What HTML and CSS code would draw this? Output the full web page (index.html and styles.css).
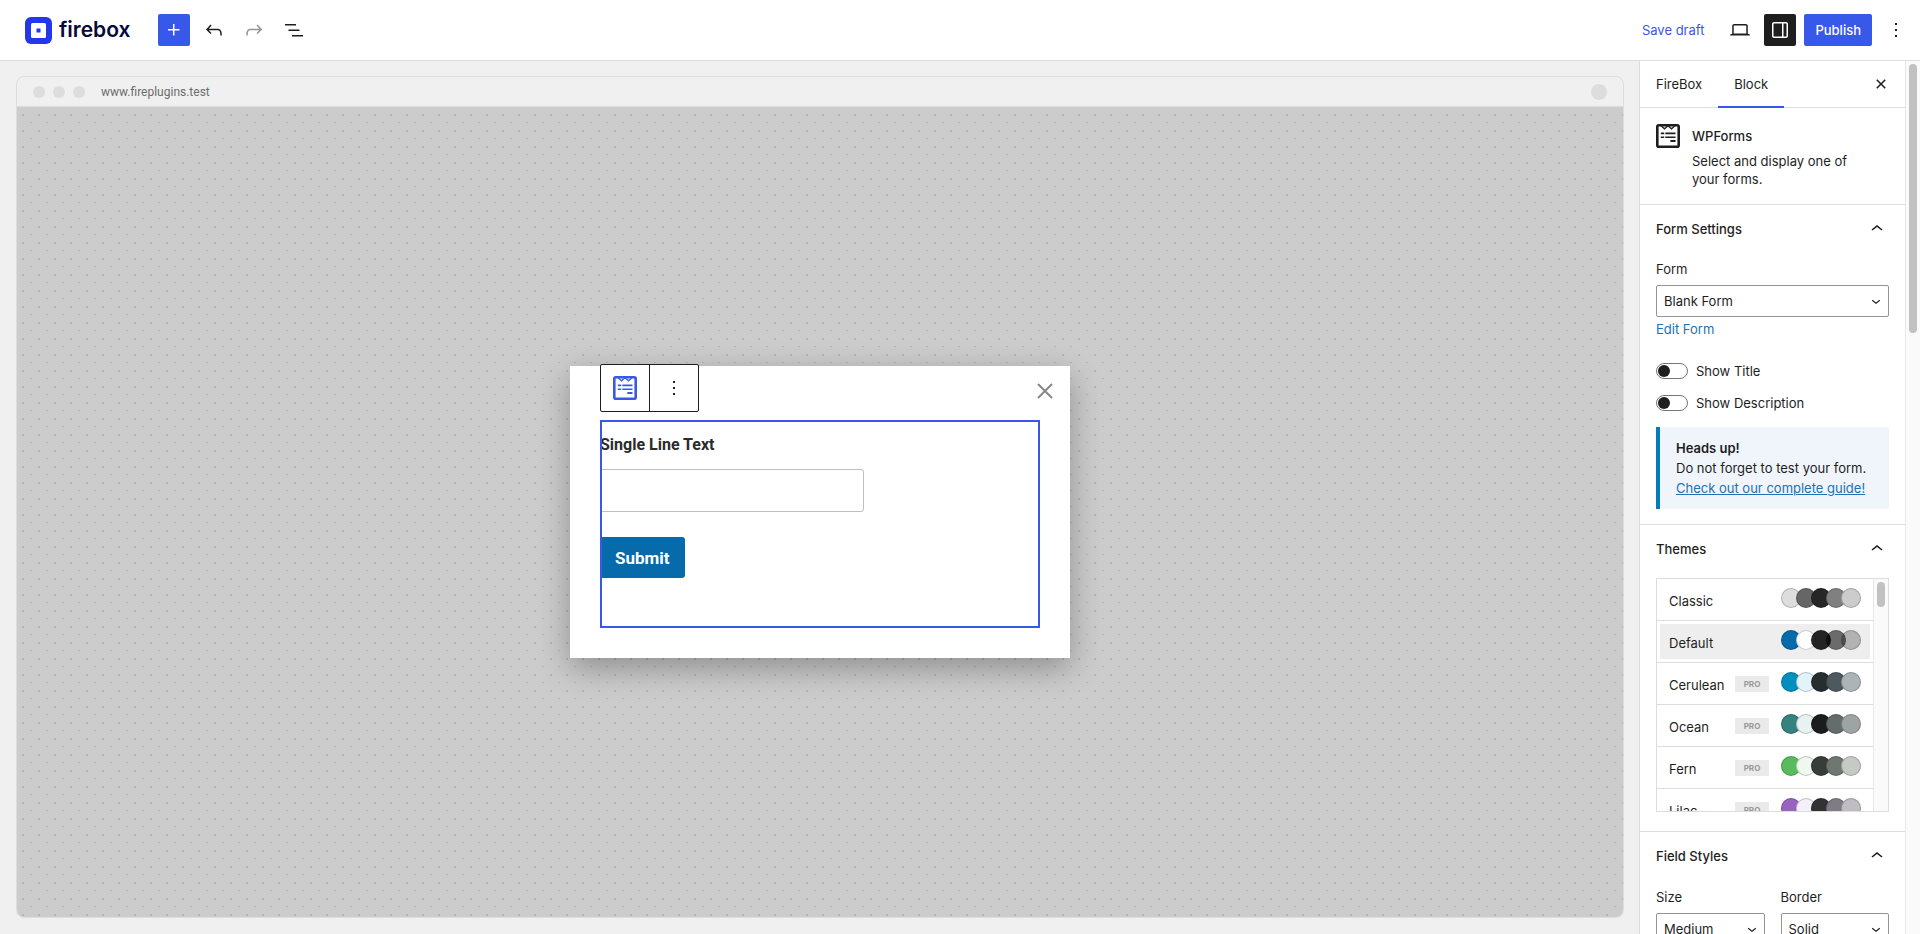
FILE: index.html
```
<!DOCTYPE html>
<html lang="en">
<head>
    <meta charset="UTF-8">
    <meta name="viewport" content="width=device-width, initial-scale=1.0">
    <title>FireBox</title>
    <link rel="stylesheet" href="styles.css">
</head>
<body>
    <!-- Shared icons -->
    <svg class="sprite" aria-hidden="true">
        <symbol id="chevron-up" viewBox="0 0 24 24"><path d="M6.5 12.4L12 8l5.5 4.4-.9 1.2L12 10l-4.5 3.6-1-1.2z"/></symbol>
        <symbol id="chevron-down" viewBox="0 0 24 24"><path d="M17.5 11.6L12 16l-5.5-4.4.9-1.2L12 14l4.5-3.6 1 1.2z"/></symbol>
        <symbol id="more" viewBox="0 0 24 24"><path d="M13 19h-2v-2h2v2zm0-6h-2v-2h2v2zm0-6h-2V5h2v2z"/></symbol>
        <symbol id="wpforms" viewBox="0 0 24 24">
            <rect x="1.3" y="1.3" width="21.4" height="21.4" rx="1.5" fill="none" stroke="currentColor" stroke-width="2.6"/>
            <path d="M5 1.800l3.500 3L12 1.800l3.500 3L19 1.800" fill="none" stroke="currentColor" stroke-width="1.3"/>
            <path d="M4.800 8.500h3.400v1.700H4.800zM9.300 8.500h10.200v1.700H9.300zM4.800 12.400h3.400v1.700H4.800zM9.300 12.400h10.200v1.700H9.300zM14.400 16h5.100v2h-5.100z"/>
        </symbol>
    </svg>

    <header class="header">
        <div class="header-group">
            <a class="logo" href="#">
                <svg width="27" height="27" viewBox="0 0 27 27">
                    <rect width="27" height="27" rx="6" fill="#2337ec"/>
                    <rect x="6" y="6" width="15" height="15" rx="1.5" fill="#fff"/>
                    <rect x="11.5" y="11.5" width="4" height="4" fill="#2337ec"/>
                </svg>
                <span>firebox</span>
            </a>
            <button class="icon-btn primary" aria-label="Add block"><svg viewBox="0 0 24 24"><path d="M11 12.5V17.5H12.5V12.5H17.5V11H12.5V6H11V11H6V12.5H11Z"/></svg></button>
            <button class="icon-btn" aria-label="Undo"><svg viewBox="0 0 24 24"><path d="M18.3 11.7c-.6-.6-1.4-.9-2.3-.9H6.7l2.9-3.3-1.1-1-4.5 5L8.5 16l1-1-2.7-2.7H16c.5 0 .9.2 1.3.5 1 1 1 3.4 1 4.5v.3h1.5v-.2c0-1.5 0-4.3-1.5-5.7z"/></svg></button>
            <button class="icon-btn" aria-label="Redo" disabled><svg viewBox="0 0 24 24"><path d="M15.6 6.5l-1.1 1 2.9 3.3H8c-.9 0-1.7.3-2.3.9-1.4 1.5-1.4 4.2-1.4 5.6v.2h1.5v-.3c0-1.1 0-3.5 1-4.5.3-.3.7-.5 1.3-.5h9.2L14.5 15l1.1 1.1 4.6-4.6-4.6-5z"/></svg></button>
            <button class="icon-btn" aria-label="Document overview"><svg viewBox="0 0 24 24"><path d="M3 6h11v1.5H3V6Zm3.5 5.5h11V13h-11v-1.5ZM21 17H10v1.5h11V17Z"/></svg></button>
        </div>
        <div class="header-group">
            <button class="text-btn">Save draft</button>
            <button class="icon-btn" aria-label="Preview"><svg viewBox="0 0 24 24"><path d="M20.5 16h-.7V8c0-1.1-.9-2-2-2H6.2c-1.1 0-2 .9-2 2v8h-.7c-.8 0-1.5.7-1.5 1.5h20c0-.8-.7-1.5-1.5-1.5zM5.7 8c0-.3.2-.5.5-.5h11.6c.3 0 .5.2.5.5v7.6H5.7V8z"/></svg></button>
            <button class="icon-btn pressed" aria-label="Settings"><svg viewBox="0 0 24 24"><path d="M18 4H6c-1.1 0-2 .9-2 2v12c0 1.1.9 2 2 2h12c1.1 0 2-.9 2-2V6c0-1.1-.9-2-2-2zm-4 14.5H6c-.3 0-.5-.2-.5-.5V6c0-.3.2-.5.5-.5h8v13zm4.5-.5c0 .3-.2.5-.5.5h-2.5v-13H18c.3 0 .5.2.5.5v12z"/></svg></button>
            <button class="text-btn primary">Publish</button>
            <button class="icon-btn" aria-label="Options"><svg><use href="#more"/></svg></button>
        </div>
    </header>

    <div class="workspace">
        <main class="canvas">
            <div class="browser">
                <div class="browser-bar">
                    <span class="dot"></span>
                    <span class="dot"></span>
                    <span class="dot"></span>
                    <span class="address">www.fireplugins.test</span>
                    <span class="avatar"></span>
                </div>
                <div class="browser-page">
                    <div class="popup">
                        <div class="block-toolbar">
                            <button class="active" aria-label="WPForms"><svg><use href="#wpforms"/></svg></button>
                            <button aria-label="Options"><svg><use href="#more"/></svg></button>
                        </div>
                        <button class="popup-close" aria-label="Close">
                            <svg viewBox="0 0 16 16"><path d="M1 1l14 14M15 1L1 15" stroke="currentColor" stroke-width="2"/></svg>
                        </button>
                        <form class="form-block">
                            <label for="single">Single Line Text</label>
                            <input type="text" id="single">
                            <button type="button">Submit</button>
                        </form>
                    </div>
                </div>
            </div>
        </main>

        <aside class="sidebar">
            <div class="sidebar-content">
                <div class="tabs">
                    <button class="tab">FireBox</button>
                    <button class="tab active">Block</button>
                    <button class="icon-btn tabs-close" aria-label="Close settings"><svg viewBox="0 0 24 24"><path d="M12 13.06l3.712 3.713 1.061-1.06L13.061 12l3.712-3.712-1.06-1.06L12 10.938 8.288 7.227l-1.061 1.06L10.939 12l-3.712 3.712 1.06 1.061L12 13.061z"/></svg></button>
                </div>

                <div class="block-card">
                    <svg><use href="#wpforms"/></svg>
                    <div>
                        <h2>WPForms</h2>
                        <p>Select and display one of your forms.</p>
                    </div>
                </div>

                <section class="panel">
                    <button class="panel-title">Form Settings<svg><use href="#chevron-up"/></svg></button>
                    <label class="field-label" for="form">Form</label>
                    <div class="select">
                        <select id="form"><option>Blank Form</option></select>
                        <svg><use href="#chevron-down"/></svg>
                    </div>
                    <a class="edit-link" href="#">Edit Form</a>
                    <label class="toggle"><input type="checkbox">Show Title</label>
                    <label class="toggle"><input type="checkbox">Show Description</label>
                    <div class="notice">
                        <strong>Heads up!</strong>
                        <p>Do not forget to test your form.</p>
                        <a href="#">Check out our complete guide!</a>
                    </div>
                </section>

                <section class="panel">
                    <button class="panel-title">Themes<svg><use href="#chevron-up"/></svg></button>
                    <div class="themes">
                        <div class="theme-list" id="themeList"></div>
                        <div class="track"><div class="thumb"></div></div>
                    </div>
                </section>

                <section class="panel">
                    <button class="panel-title">Field Styles<svg><use href="#chevron-up"/></svg></button>
                    <div class="field-row">
                        <div class="field">
                            <label class="field-label" for="size">Size</label>
                            <div class="select">
                                <select id="size"><option>Medium</option></select>
                                <svg><use href="#chevron-down"/></svg>
                            </div>
                        </div>
                        <div class="field">
                            <label class="field-label" for="border">Border</label>
                            <div class="select">
                                <select id="border"><option>Solid</option></select>
                                <svg><use href="#chevron-down"/></svg>
                            </div>
                        </div>
                    </div>
                </section>
            </div>
            <div class="track"><div class="thumb"></div></div>
        </aside>
    </div>

    <script src="script.js"></script>
</body>
</html>
```

FILE: styles.css
```
* {
    box-sizing: border-box;
}

body {
    margin: 0;
    height: 100vh;
    display: flex;
    flex-direction: column;
    overflow: hidden;
    background: #f0f0f0;
    color: #1e1e1e;
    font-family: Inter, "Liberation Sans", sans-serif;
    font-size: 13px;
    line-height: 18px;
}

h2, p {
    margin: 0;
}

button, select, input {
    font: inherit;
    color: inherit;
}

button {
    padding: 0;
    border: 0;
    background: none;
    cursor: pointer;
}

svg {
    fill: currentColor;
    flex-shrink: 0;
}

a {
    color: #2271b1;
}

.sprite {
    display: none;
}

/* Header */
.header {
    display: flex;
    justify-content: space-between;
    flex-shrink: 0;
    padding: 14px 8px 14px 25px;
    background: #fff;
    border-bottom: 1px solid #ddd;
}

.header-group {
    display: flex;
    align-items: center;
    gap: 8px;
}

.logo {
    display: flex;
    align-items: center;
    gap: 7px;
    margin-right: 20px;
    color: #06083b;
    font-size: 21px;
    font-weight: 600;
    text-decoration: none;
}

.icon-btn {
    display: flex;
    align-items: center;
    justify-content: center;
    width: 32px;
    height: 32px;
    border-radius: 2px;
}

.icon-btn svg {
    width: 24px;
    height: 24px;
}

.icon-btn:disabled {
    color: #949494;
}

.text-btn {
    height: 32px;
    padding: 0 12px;
    border-radius: 2px;
    color: #3858e9;
}

.primary {
    background: #3858e9;
    color: #fff;
}

.text-btn.primary {
    padding: 0 11px;
    font-weight: 500;
}

.icon-btn.pressed {
    background: #1e1e1e;
    color: #fff;
}

/* Canvas */
.workspace {
    display: flex;
    flex: 1;
    min-height: 0;
}

.canvas {
    display: flex;
    flex: 1;
    padding: 15px 15px 16px 16px;
}

.browser {
    display: flex;
    flex-direction: column;
    flex: 1;
    border: 1px solid #ddd;
    border-radius: 8px;
    overflow: hidden;
}

.browser-bar {
    display: flex;
    align-items: center;
    gap: 8px;
    height: 30px;
    padding: 0 16px;
    border-bottom: 1px solid #ddd;
    color: #6c6c6c;
    font-family: Roboto, sans-serif;
    font-size: 12px;
}

.dot {
    width: 12px;
    height: 12px;
    border-radius: 50%;
    background: #ddd;
}

.address {
    margin-left: 8px;
}

.avatar {
    width: 16px;
    height: 16px;
    margin-left: auto;
    border-radius: 50%;
    background: #ddd;
}

.browser-page {
    display: flex;
    flex: 1;
    align-items: center;
    justify-content: center;
    background-color: #ccc;
    background-image: radial-gradient(circle at 6px 8px, #b4b4b4 1px, transparent 1px), radial-gradient(circle at 14px 16px, #b4b4b4 1px, transparent 1px);
    background-size: 16px 16px;
}

.popup {
    position: relative;
    width: 500px;
    padding: 54px 30px 30px;
    background: #fff;
    box-shadow: 0 10px 30px rgba(0, 0, 0, 0.3);
}

.block-toolbar {
    position: absolute;
    top: -2px;
    left: 30px;
    display: flex;
    border: 1px solid #1e1e1e;
    border-radius: 2px;
    background: #fff;
}

.block-toolbar button {
    display: flex;
    align-items: center;
    justify-content: center;
    width: 48px;
    height: 46px;
}

.block-toolbar button + button {
    width: 49px;
    border-left: 1px solid #1e1e1e;
}

.block-toolbar svg {
    width: 24px;
    height: 24px;
}

.block-toolbar .active {
    color: #3858e9;
}

.popup-close {
    position: absolute;
    top: 17px;
    right: 17px;
    color: #888;
}

.popup-close svg {
    display: block;
    width: 16px;
    height: 16px;
}

.form-block {
    position: relative;
    display: flex;
    flex-direction: column;
    align-items: flex-start;
    padding: 15px 0 50px;
    font-family: Roboto, sans-serif;
}

/* selection outline */
.form-block::after {
    content: "";
    position: absolute;
    inset: 0;
    border: 2px solid #3858e9;
    pointer-events: none;
}

.form-block label {
    color: #2b2b2b;
    font-size: 16px;
    font-weight: 700;
    line-height: 20px;
}

.form-block input {
    width: 60%;
    height: 43px;
    margin: 14px 0 25px;
    padding: 0 12px;
    border: 1px solid #bfbfbf;
    border-radius: 3px;
}

.form-block button {
    height: 41px;
    padding: 0 15px;
    border-radius: 3px;
    background: #066aab;
    color: #fff;
    font-size: 17px;
    font-weight: 700;
}

/* Sidebar */
.sidebar {
    display: flex;
    width: 281px;
    border-left: 1px solid #ddd;
    background: #fff;
}

.sidebar-content {
    flex: 1;
    min-width: 0;
    overflow: hidden;
}

.track {
    width: 15px;
    padding: 3px;
    border-left: 1px solid #e8e8e8;
    background: #fafafa;
}

.thumb {
    width: 8px;
    height: 25px;
    border-radius: 4px;
    background: #c1c1c1;
}

.sidebar > .track .thumb {
    height: 269px;
}

.tabs {
    display: flex;
    align-items: center;
    height: 47px;
    border-bottom: 1px solid #ddd;
}

.tab {
    height: 47px;
    padding: 0 16px;
}

.tab.active {
    box-shadow: inset 0 -2px #3858e9;
}

.tabs-close {
    margin-left: auto;
    margin-right: 8px;
}

.block-card {
    display: flex;
    gap: 12px;
    padding: 16px 36px 16px 16px;
}

.block-card svg {
    width: 24px;
    height: 24px;
}

.block-card h2 {
    margin-bottom: 4px;
    font-size: 13px;
    font-weight: 500;
    line-height: 24px;
}

.panel {
    padding: 0 16px 15px;
    border-top: 1px solid #ddd;
}

.panel-title {
    display: flex;
    align-items: center;
    justify-content: space-between;
    width: 100%;
    height: 48px;
    font-weight: 500;
}

.panel-title svg {
    width: 24px;
    height: 24px;
}

.field-label {
    display: block;
    margin: 7px 0;
}

.select {
    position: relative;
}

.select select {
    display: block;
    width: 100%;
    height: 32px;
    padding: 0 26px 0 7px;
    border: 1px solid #949494;
    border-radius: 2px;
    background: #fff;
    appearance: none;
}

.select svg {
    position: absolute;
    top: 7px;
    right: 4px;
    width: 18px;
    height: 18px;
    pointer-events: none;
}

.edit-link {
    display: block;
    margin: 3px 0 24px;
    text-decoration: none;
}

.toggle {
    display: flex;
    align-items: center;
    gap: 8px;
    height: 18px;
    margin-bottom: 14px;
}

.toggle input {
    width: 32px;
    height: 16px;
    margin: 0;
    padding: 1px;
    border: 1px solid #757575;
    border-radius: 8px;
    appearance: none;
}

.toggle input::before {
    content: "";
    display: block;
    width: 12px;
    height: 12px;
    border-radius: 50%;
    background: #1e1e1e;
}

.notice {
    margin-top: 15px;
    padding: 11px 16px;
    border-left: 4px solid #007cba;
    background: #f0f5fc;
    line-height: 20px;
}

.notice strong {
    font-weight: 600;
}

.themes {
    display: flex;
    height: 234px;
    margin: 5px 0 4px;
    border: 1px solid #ddd;
    overflow: hidden;
}

.theme-list {
    flex: 1;
}

.theme {
    display: flex;
    align-items: center;
    width: 100%;
    height: 42px;
    padding: 3px;
    border-bottom: 1px solid #ddd;
    text-align: left;
}

.theme-inner {
    display: flex;
    align-items: center;
    flex: 1;
    height: 35px;
    padding: 0 9px;
}

.theme.selected .theme-inner {
    background: #eee;
}

.theme-name {
    flex: 1;
    padding-top: 2px;
}

.pro {
    width: 34px;
    margin-right: 12px;
    background: #eaeaea;
    color: #999;
    font-size: 8px;
    font-weight: 700;
    line-height: 16px;
    text-align: center;
}

.swatches {
    display: flex;
    flex-direction: row-reverse;
    margin-bottom: 3px;
}

/* reversed so that the first colour lies on top */
.swatch {
    width: 20px;
    height: 20px;
    margin-left: -5px;
    border: 1px solid rgba(0, 0, 0, 0.2);
    border-radius: 50%;
}

.swatch:last-child {
    margin-left: 0;
}

.field-row {
    display: flex;
    gap: 16px;
    padding-top: 1px;
}

.field {
    flex: 1;
}
```

FILE: script.js
```
const themes = [
    { name: 'Classic', colors: ['#dddddd', '#666666', '#262626', '#808080', '#cccccc'] },
    { name: 'Default', selected: true, colors: ['#066aab', '#ffffff', 'rgba(0, 0, 0, 0.85)', 'rgba(0, 0, 0, 0.55)', 'rgba(0, 0, 0, 0.25)'] },
    { name: 'Cerulean', pro: true, colors: ['#0090bf', '#e3f3fa', '#262d31', '#4d595f', '#acb4b8'] },
    { name: 'Ocean', pro: true, colors: ['#35827e', '#e9f2f2', '#191d1d', '#646c6c', '#9ea4a4'] },
    { name: 'Fern', pro: true, colors: ['#58bb5d', '#eef8ee', '#393d39', '#6f7870', '#c6cac5'] },
    { name: 'Lilac', pro: true, colors: ['#9864c0', '#f4effa', '#323133', '#807c86', '#bfbcc2'] }
];

document.getElementById('themeList').innerHTML = themes.map(theme => `
    <button class="theme ${theme.selected ? 'selected' : ''}">
        <span class="theme-inner">
            <span class="theme-name">${theme.name}</span>
            ${theme.pro ? '<span class="pro">PRO</span>' : ''}
            <span class="swatches">
                ${theme.colors.slice().reverse().map(c => `<span class="swatch" style="background: ${c}"></span>`).join('')}
            </span>
        </span>
    </button>
`).join('');
```
